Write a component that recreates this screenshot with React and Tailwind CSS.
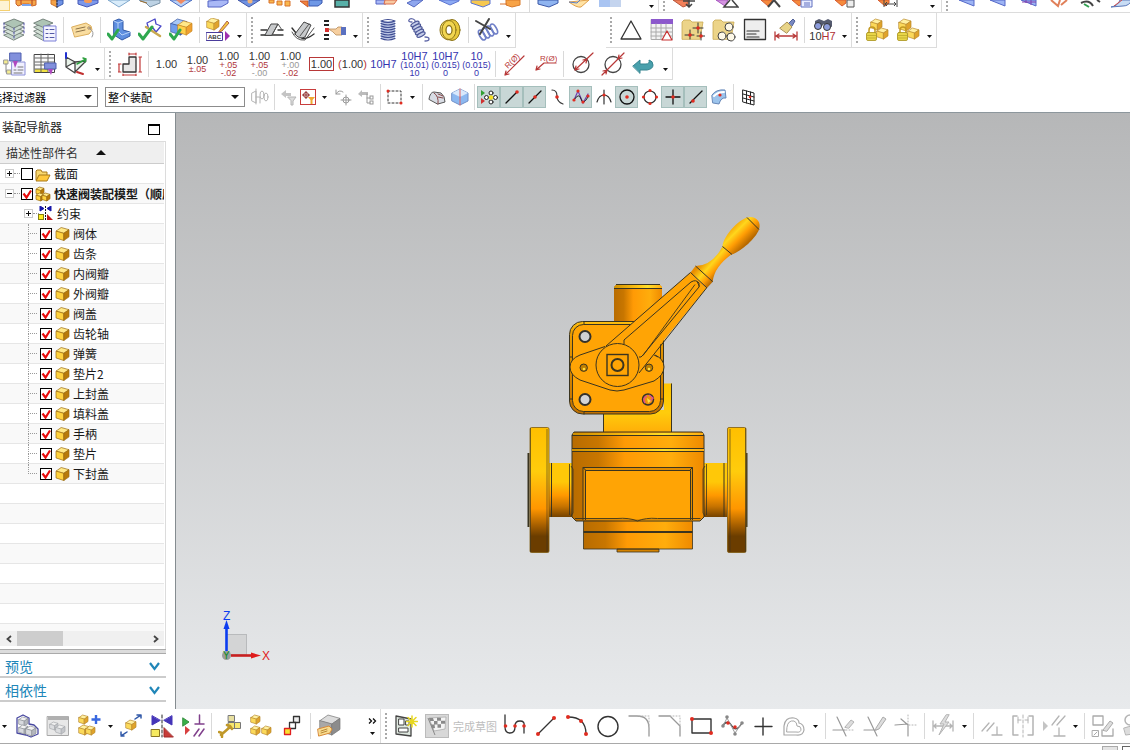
import React from "react";

/* ---------- toolbar primitives ---------- */

function Tool({ label, className = "", children }) {
  return (
    <button type="button" aria-label={label} title={label} className={`flex h-full w-[31px] shrink-0 items-center justify-center ${className}`}>
      {children}
    </button>
  );
}

function Snap({ label, on, className = "", children }) {
  return (
    <button
      type="button"
      aria-label={label}
      aria-pressed={!!on}
      className={`flex h-[22px] w-[23px] shrink-0 items-center justify-center ${on ? "border border-[#a5bfbc] bg-[#c8d7d6]" : ""} ${className}`}
    >
      {children}
    </button>
  );
}

function Sep() {
  return <span className="flex h-full w-1.5 shrink-0 items-center justify-center"><span className="h-[26px] w-px bg-[#d9d9d9]" /></span>;
}

function Grip() {
  return (
    <span className="flex h-full w-[9px] shrink-0 items-center justify-center">
      <span className="h-[26px] border-l-2 border-dotted border-[#a9a9a9]" />
    </span>
  );
}

function More({ label = "更多", mid = false, className = "" }) {
  return (
    <button type="button" aria-label={label} className={`flex h-full w-[13px] shrink-0 items-center justify-center ${mid ? "" : "pt-3"} ${className}`}>
      <svg width="5" height="3" viewBox="0 0 5 3"><path d="M0 0h5L2.500 3z" fill="#111" /></svg>
    </button>
  );
}

function Icon({ children, className = "" }) {
  return (
    <svg viewBox="0 0 24 24" className={`size-6 shrink-0 ${className}`} fill="none" strokeLinecap="round" strokeLinejoin="round">
      {children}
    </svg>
  );
}

function Small({ children }) {
  return (
    <svg viewBox="0 0 18 18" className="size-[18px] shrink-0" fill="none" strokeLinecap="round">
      {children}
    </svg>
  );
}

function Strip({ children }) {
  return (
    <svg viewBox="0 0 24 8" className="h-2 w-6 shrink-0 self-start" fill="none">
      {children}
    </svg>
  );
}

const GOLD = ["#fff0a0", "#fbd95a", "#e0a32a", "#b98a2c"];
const PART = ["#ffe988", "#ffd23e", "#b87a08", "#9a6a10"];
const BLUE = ["#a8c8f8", "#6f9cec", "#3d62c0", "#34529e"];
const GRAY = ["#f2f2f2", "#d8dade", "#b4b7bd", "#8d9096"];

function Cube({ x = 0, y = 0, s = 12, c = GOLD }) {
  const h = s * 0.28;
  const w = s * 0.6;
  const b = s;
  return (
    <g stroke={c[3]} strokeWidth="0.7" strokeLinejoin="round">
      <path d={`M${x} ${y + h}L${x + s - w} ${y}L${x + s} ${y + h * 0.6}L${x + w} ${y + h * 1.6}Z`} fill={c[0]} />
      <path d={`M${x} ${y + h}L${x + w} ${y + h * 1.6}V${y + b}L${x} ${y + b - h * 0.7}Z`} fill={c[1]} />
      <path d={`M${x + w} ${y + h * 1.6}L${x + s} ${y + h * 0.6}V${y + b - h}L${x + w} ${y + b}Z`} fill={c[2]} />
    </g>
  );
}

function Dot({ x, y, r = 1.8, c = "#e02c20" }) {
  return <circle cx={x} cy={y} r={r} fill={c} />;
}

const Tick = () => <path d="M1 16l4 5 6-9" stroke="#2fa84f" strokeWidth="3" />;
const Lock = () => (
  <g>
    <path d="M4 15v-3a3 3 0 016 0v3" stroke="#c49a20" strokeWidth="1.500" />
    <rect x="1.500" y="14.500" width="10" height="8" rx="1.500" fill="#e8d648" stroke="#a8921c" strokeWidth=".8" />
    <path d="M2 17.500h9M2 20h9" stroke="#b8a428" strokeWidth=".7" />
  </g>
);
const Folder = () => <path d="M1 21V4l2-2h6l2 2h11l-3 17z" fill="#ecd489" stroke="#c9a851" strokeWidth=".8" />;

/* ---------- dimension-style buttons ---------- */

function Dim({ label, main, a, b, tone = "text-[#333]", low = "text-[#b0353a]", low2 = "text-[#b0353a]", className = "" }) {
  return (
    <Tool label={label}>
      <span className={`flex flex-col items-center whitespace-nowrap font-[Liberation_Sans,sans-serif] text-[11px] leading-[10px] ${tone} ${className}`}>
        <span>{main}</span>
        {a && <span className={`text-[9px] leading-[8px] ${low}`}>{a}</span>}
        {b && <span className={`text-[9px] leading-[8px] ${low2}`}>{b}</span>}
      </span>
    </Tool>
  );
}

/* ---------- toolbars ---------- */

function TopStrip() {
  const sheet = (fill, line) => <path d="M1 0h22L12 7z" fill={fill} stroke={line} />;
  const angled = <path d="M3 0l7 6 4-3V0z" fill="#f58a3c" stroke="#d65a30" />;
  const bluePlane = <path d="M4 0l15 6V0z" fill="#9db4f4" stroke="#5568c8" />;
  return (
    <div className="flex h-[13px] overflow-hidden border-b border-[#dcdcdc]">
      <button type="button" aria-label="草图" className="-ml-0.5 h-[11px] w-3 shrink-0 border border-[#f5d070] bg-[#fdf3d4]" />
      <Tool label="拉伸"><Strip><path d="M2 0h20v5l-4 1-3-2H9L4 6 2 4z" fill="#f6a84a" stroke="#c8602a" /><path d="M8 4h9v2H8z" fill="#7ba4ec" /><path d="M7 0v4M18 0v5" stroke="#b04020" /></Strip></Tool>
      <Tool label="旋转"><Strip><path d="M6 0v4l6 3V0z" fill="#f3a347" stroke="#d0742a" /><path d="M12 0v7l6-3V0z" fill="#6f93e6" stroke="#3c5cb0" /><path d="M12 0v8" stroke="#333" strokeDasharray="2 1" /></Strip></Tool>
      <Tool label="孔"><Strip><path d="M2 0h20v3l-11 4L2 4z" fill="#7c98ea" stroke="#4658b8" /><ellipse cx="12" cy="1" rx="4" ry="2" fill="#f59a56" /></Strip></Tool>
      <Tool label="基准平面"><Strip>{sheet("#d9ecfa", "#7fa8cc")}</Strip></Tool>
      <Tool label="缝合"><Strip><path d="M1 0l7 3 4 4 10-4V0z" fill="#bdd2e4" stroke="#7890a4" /><path d="M2 1l7 2" stroke="#a07030" /></Strip></Tool>
      <Tool label="合并"><Strip>{sheet("#b8d0f6", "#4a6cc0")}<path d="M7 0h10l-5 4z" fill="#f08a60" /></Strip></Tool>
      <Sep />
      <Tool label="边倒圆"><Strip><path d="M2 1l12-1h8v3l-7 4H2z" fill="#a9b8f6" stroke="#5464c4" /></Strip></Tool>
      <Tool label="倒斜角"><Strip>{sheet("#6f92e2", "#4458a8")}<circle cx="13" cy="1" r="2.500" fill="#f2b478" /></Strip></Tool>
      <Tool label="阵列"><Strip><g fill="#f9b84e" stroke="#d8722c"><path d="M1 0h5v3H1zM9 1h5v4H9zM17 1h5v5h-5z" /></g></Strip></Tool>
      <Tool label="镜像"><Strip><path d="M1 1h8v6z" fill="#f0823c" stroke="#c8562a" /><path d="M10 0h13v3l-4 3h-9z" fill="#6f98e6" stroke="#3b58b0" /></Strip></Tool>
      <Tool label="颜色"><Strip><path d="M5 0h14v7H5z" fill="#58b0a8" stroke="#333" strokeWidth="1.500" /></Strip></Tool>
      <Tool label="替换面" className="ml-3.5"><Strip><path d="M1 0h10v4H1z" fill="#a9b8f6" stroke="#5464c4" /><path d="M10 0h12l-3 4H9z" fill="#f8c8a0" stroke="#d86a4a" /></Strip></Tool>
      <Tool label="偏置面"><Strip><path d="M1 3l6-3h10l-9 7z" fill="#8ea6ee" stroke="#5468c0" /></Strip></Tool>
      <Tool label="抽壳"><Strip><path d="M2 0l11 5 9-4V0z" fill="#8caaf4" stroke="#5c74d0" /></Strip></Tool>
      <Tool label="拔模"><Strip><path d="M3 0v3l12 4 7-3V0z" fill="#f6c850" stroke="#5c74d0" /></Strip></Tool>
      <Tool label="圆柱"><Strip><path d="M7 0v5l6 2 8-2V0z" fill="#f7a347" stroke="#d87a2a" /><path d="M1 4h7" stroke="#d8722c" /></Strip></Tool>
      <Sep />
      <Tool label="块"><Strip><path d="M2 0v4l11 3 9-4V0z" fill="#8fb4f0" stroke="#3b58a8" /></Strip></Tool>
      <Tool label="曲面"><Strip><path d="M2 2q8 6 12 5l8-7z" fill="#ffe2a4" stroke="#e0a04a" /><path d="M2 2l8 1 3-3" stroke="#5a80c8" /></Strip></Tool>
      <Tool label="网格"><Strip><path d="M1 0h22v7H1z" fill="#a9c4f2" /><path d="M12 0h11v7H12z" fill="#c4d4ee" /></Strip></Tool>
      <More mid className="ml-5" />
      <span className="border-l border-[#dcdcdc]" />
      <Grip />
      <Tool label="移动面"><Strip><path d="M1 0l10 7 5-2V0z" fill="#f2805a" stroke="#b8563c" /><path d="M11 1h12M17 0v7M14 4l3 3 3-3" stroke="#444" strokeWidth="1.500" /></Strip></Tool>
      <Tool label="删除面" className="ml-3"><Strip><path d="M1 0h12l-3 6z" fill="#d494e0" stroke="#a858c0" /><path d="M15 0l-6 7h14L17 0" fill="#fff" stroke="#444" strokeWidth="1.500" /></Strip></Tool>
      <Tool label="设为共面" className="ml-3"><Strip>{angled}<path d="M10 7l6-7 6 7" stroke="#444" strokeWidth="2" /></Strip></Tool>
      <Tool label="列表"><Strip>{angled}<path d="M12 0h11v7H12z" fill="#e8ecff" stroke="#6070c0" /><path d="M15 3h6M15 5h6" stroke="#6070c0" /></Strip></Tool>
      <Tool label="复制面" className="ml-3"><Strip>{angled}<path d="M15 0h7v7h-7z" fill="#eee" stroke="#555" /></Strip></Tool>
      <Tool label="线性尺寸" className="ml-3"><Strip>{angled}<path d="M9 0v7M22 0v7M10 4h11M12 2l-2 2 2 2M19 2l2 2-2 2" stroke="#444" /></Strip></Tool>
      <More mid className="ml-6" />
      <span className="ml-0.5 border-l border-[#dcdcdc]" />
      <Grip />
      <Tool label="四点曲面"><Strip>{bluePlane}</Strip></Tool>
      <Tool label="填充曲面"><Strip>{bluePlane}</Strip></Tool>
      <Tool label="网格曲面"><Strip>{bluePlane}<path d="M9 0v3M14 0v5M5 2h14" stroke="#8040b0" /></Strip></Tool>
      <Tool label="扫掠"><Strip><path d="M3 0l7 6 2-6M13 5l6-5" stroke="#e0805a" strokeWidth="2" /></Strip></Tool>
      <Tool label="截面曲线"><Strip><path d="M2 3q8-4 12 3M18 0l3 2" stroke="#444" strokeWidth="2" /><path d="M5 4l5 3" stroke="#30a050" strokeWidth="2" /></Strip></Tool>
      <Tool label="桥接"><Strip><path d="M1 7q7-1 9-7h12q-3 6-9 6z" fill="#c8dcf4" stroke="#5a78b8" /><path d="M4 6l8-6" stroke="#d04848" /></Strip></Tool>
    </div>
  );
}

function FeatureBar() {
  return (
    <div className="flex h-[35px] items-stretch">
      <div className="-ml-0.5 flex border-b border-r border-[#dcdcdc]">
        <Tool label="图层设置"><Icon><g stroke="#6d7a74" strokeWidth=".9"><path d="M2 17l10-4 10 4-10 5z" fill="#c6d6cb" /><path d="M2 13l10-4 10 4-10 5z" fill="#d5e2d8" /><path d="M2 9l10-4 10 4-10 5z" fill="#c6d6cb" /><path d="M2 5l10-4 10 4-10 5z" fill="#aec4b5" /></g><path d="M2 5v12M22 5v12M12 10v12" stroke="#5050a8" strokeDasharray="2 2" /></Icon></Tool>
        <Tool label="图层类别"><Icon><g stroke="#6d7a74" strokeWidth=".9"><path d="M1 17l9-4 10 4-10 5z" fill="#c6d6cb" /><path d="M1 13l9-4 10 4-10 5z" fill="#d5e2d8" /><path d="M1 9l9-4 10 4-10 5z" fill="#c6d6cb" /><path d="M1 5l9-4 10 4-10 4z" fill="#aec4b5" /></g><rect x="11" y="8" width="12" height="15" fill="#f4f4ff" stroke="#7c80d8" /><path d="M13 11.500h2M13 15.500h2M13 19.500h2M17 11.500h4M17 15.500h4M17 19.500h4" stroke="#555aa8" /></Icon></Tool>
        <Sep />
        <Tool label="属性"><Icon><path d="M2 9l14-4 5 3 1 4-3 4-14 3z" fill="#f9dda0" stroke="#dcae5c" /><path d="M6 11l9-2M6 14l9-2" stroke="#8c7248" /><circle cx="19" cy="10" r="1.200" fill="#fff" stroke="#a08050" /><path d="M20 11q5 3 2 8" stroke="#999" /></Icon></Tool>
        <Sep />
        <Tool label="检查体"><Icon><path d="M7 3l5-2 4 2v9l7 2v4l-8 4-8-5z" fill="#5f8fe0" stroke="#3058a8" /><path d="M7 3l4 2 5-2M11 5v8l4 4 8-3" stroke="#b8d2f8" /><Tick /></Icon></Tool>
        <Tool label="检查草图"><Icon><path d="M9 5l8-4 1 5 5 2-5 6-3-4-4 2z" fill="#fff" stroke="#4a48c8" strokeWidth="1.300" /><path d="M8 9l14 9" stroke="#c8a850" strokeWidth="2.500" /><path d="M1 16l4 5 9-12" stroke="#2fa84f" strokeWidth="3" /></Icon></Tool>
        <Tool label="检查部件"><Icon><Cube x={2} y={1} s={16} c={BLUE} /><Cube x={9} y={3} s={14} c={["#ffe88a", "#ffd04a", "#f0a030", "#c88820"]} /><Tick /></Icon></Tool>
        <Sep />
        <Tool label="PMI 注释">
          <Icon>
            <Cube x={1} y={0} s={12} />
            <path d="M14 12l7-9 2 2-7 8-3 1z" fill="#f4c542" stroke="#a04838" strokeWidth=".8" />
            <rect x="0.500" y="14.500" width="16" height="8" fill="#fff" stroke="#4a3c9c" />
            <text x="2" y="21" fontSize="6" fontWeight="700" fontFamily="Liberation Sans" fill="#333">ABC</text>
            <path d="M19 13v10l5-5z" fill="#a030b0" />
          </Icon>
        </Tool>
        <More />
      </div>
      <div className="flex border-b border-r border-[#dcdcdc]">
        <Grip />
        <Tool label="筋板"><Icon><path d="M1 17h22M1 12h6M18 12h5" stroke="#333" strokeWidth="1.400" /><path d="M5 17l6-11h7l-6 11z" fill="#c8cacc" stroke="#444" /><path d="M12 17l6-11 4 6" stroke="#555" /></Icon></Tool>
        <Tool label="凸起"><Icon><path d="M1 10q6 8 10 10t12-4" stroke="#333" strokeWidth="1.400" /><path d="M4 16l9-12 7 3-6 12q-6 3-10-3z" fill="#c8cacc" stroke="#444" /><path d="M9 18L18 6M1 14q4 9 13 8l9-12" stroke="#555" /></Icon></Tool>
        <Tool label="特征重排序"><Icon><path d="M2 3h5M2 7h5M2 17h5M2 21h5" stroke="#222" strokeWidth="1.800" strokeLinecap="butt" /><rect x="3" y="10" width="4" height="4" fill="#d83030" /><path d="M7 11h7l2-2h4v8h-6l-3-3z" fill="#f6cfa0" stroke="#b88a58" strokeWidth=".8" /><path d="M19 9h5v8h-5z" fill="#5a70c0" /></Icon></Tool>
        <More />
      </div>
      <div className="flex border-b border-r border-[#dcdcdc]">
        <Grip />
        <Tool label="圆柱弹簧"><Icon><path d="M5 3h14v18H5z" fill="#b9c4e4" /><g stroke="#3c4a90" strokeWidth="1.200"><path d="M5 3q7-3 14 0M5 3q7 3 14 0M5 5.500q7 3 14 0M5 8q7 3 14 0M5 10.500q7 3 14 0M5 13q7 3 14 0M5 15.500q7 3 14 0M5 18q7 3 14 0M5 20.500q7 3 14 0" /></g></Icon></Tool>
        <Tool label="拉伸弹簧"><Icon><path d="M5 4q-4 0-3-2t4-1 2 4M18 19q4 0 4 2t-4 2" stroke="#6068a8" strokeWidth="1.300" /><g stroke="#4d5898" strokeWidth="1.200" fill="#c4cce8"><ellipse cx="8" cy="6" rx="4.500" ry="1.800" transform="rotate(-28 8 6)" /><ellipse cx="9.500" cy="8.700" rx="4.500" ry="1.800" transform="rotate(-28 9.500 8.700)" /><ellipse cx="11" cy="11.400" rx="4.500" ry="1.800" transform="rotate(-28 11 11.400)" /><ellipse cx="12.500" cy="14" rx="4.500" ry="1.800" transform="rotate(-28 12.500 14)" /><ellipse cx="14" cy="16.700" rx="4.500" ry="1.800" transform="rotate(-28 14 16.700)" /></g></Icon></Tool>
        <Tool label="碟形弹簧"><Icon><ellipse cx="14" cy="12" rx="8" ry="10.500" fill="#e8c83c" stroke="#8c7418" /><path d="M10 2q-8 2-8 10t8 10" fill="#f6de68" stroke="#8c7418" /><ellipse cx="11" cy="12" rx="7" ry="9.500" fill="#f2d650" stroke="#8c7418" /><ellipse cx="11" cy="12" rx="3" ry="4.500" fill="#fff" stroke="#8c7418" strokeWidth="1.300" /></Icon></Tool>
        <Sep />
        <Tool label="删除弹簧"><Icon><g stroke="#7080c8" strokeWidth="1.600"><ellipse cx="7" cy="17" rx="2.500" ry="5.500" transform="rotate(-30 7 17)" /><ellipse cx="11" cy="15" rx="2.500" ry="5.500" transform="rotate(-30 11 15)" /><ellipse cx="15" cy="13" rx="2.500" ry="5.500" transform="rotate(-30 15 13)" /><ellipse cx="19" cy="11" rx="2.500" ry="5.500" transform="rotate(-30 19 11)" /></g><path d="M1 3l14 8M14 1L5 16" stroke="#444" strokeWidth="2" /></Icon></Tool>
        <More />
      </div>
      <div className="ml-[90px] flex border-b border-r border-[#dcdcdc]">
        <Grip />
        <Tool label="三角"><Icon><path d="M12 3l10 18H2z" stroke="#333" strokeWidth="1.300" /></Icon></Tool>
        <Tool label="表格"><Icon><rect x="1.500" y="1.500" width="21" height="20" fill="#f3f3f3" stroke="#aaa" /><path d="M1 1h22v5H1z" fill="#8c58cc" /><path d="M1 10h21M1 14h21M1 18h21M6 6v15M11 6v15M16 6v15" stroke="#aaa" /><path d="M17 13l5 9H12z" fill="#fff" stroke="#c83030" strokeWidth="1.200" /></Icon></Tool>
        <Tool label="点集"><Icon><Folder /><path d="M17 5v10M12 10h10M9 12v9M4 17h9M20 14v8M16 18h8" stroke="#333" /><Dot x={17} y={10} /><Dot x={9} y={17} /><Dot x={20} y={18} /></Icon></Tool>
        <Tool label="圆集"><Icon><Folder /><g stroke="#444" fill="#fdf8e8"><circle cx="17" cy="9" r="4" /><circle cx="10" cy="18" r="4" /><circle cx="19" cy="19" r="4" /></g></Icon></Tool>
        <Tool label="注释"><Icon><rect x="1.500" y="1.500" width="21" height="20" fill="#eee" stroke="#333" strokeWidth="1.300" /><path d="M4 13h12M4 16h9M4 19h12" stroke="#333" strokeWidth="1.200" /></Icon></Tool>
        <Tool label="尺寸样式"><Icon><path d="M15 5l4-4 2 2-3 5z" fill="#7888c0" stroke="#506098" /><path d="M6 10l7-6 5 5-5 6z" fill="#e8d488" stroke="#a89050" /><path d="M1 14v8M23 14v8M2 18h20M5 16l-3 2 3 2M19 16l3 2-3 2" stroke="#b83838" strokeWidth="1.300" /></Icon></Tool>
        <Sep />
        <Tool label="查找公差">
          <span className="flex flex-col items-center">
            <svg width="20" height="13" viewBox="0 0 20 13"><path d="M2 3l4-2 5 2 4-2 4 2v6l-8-3-2 2-7-1z" fill="#555b70" /><circle cx="5" cy="8" r="3.500" fill="#8c9cdc" stroke="#333" /><circle cx="14" cy="9" r="3.500" fill="#8c9cdc" stroke="#333" /></svg>
            <span className="font-[Liberation_Sans,sans-serif] text-[11px] leading-[11px] text-[#333]">10<span className="text-[#b03035]">H7</span></span>
          </span>
        </Tool>
        <More />
      </div>
      <div className="flex border-b border-r border-[#dcdcdc]">
        <Grip />
        <Tool label="锁定组件"><Icon><Cube x={6} y={1} s={11} /><Cube x={12} y={10} s={11} /><Lock /></Icon></Tool>
        <Tool label="解锁组件"><Icon><Cube x={3} y={1} s={12} /><Cube x={12} y={10} s={11} /><Lock /></Icon></Tool>
        <More />
      </div>
    </div>
  );
}

function DimensionBar() {
  return (
    <div className="flex h-8 items-stretch">
      <div className="-ml-0.5 flex border-b border-r border-[#dcdcdc]">
        <Tool label="部件族"><Icon><rect x="10" y="10" width="13" height="13" fill="#f0f0ff" stroke="#8c90d8" /><path d="M16 15h5M16 18h5M12 18h2M12 21h8" stroke="#777" /><path d="M2 8h4v4H2zM5 18h4v4H5z" fill="#f4ec90" stroke="#999" /><path d="M4 12v8" stroke="#888" /><path d="M8 1h11v8H8z" fill="#8290dc" stroke="#5060b0" /><path d="M11 9h5l-3 7z" fill="#b048c0" /></Icon></Tool>
        <Tool label="电子表格"><Icon><rect x="1.500" y="2.500" width="20" height="18" fill="#fafafa" stroke="#444" /><path d="M2 17h13v3H2z" fill="#f0e040" /><path d="M2 6h19M2 10h19M2 13h19M2 17h19M8 2v18M15 2v18" stroke="#666" /><path d="M12 11h11v6H12z" fill="#8290dc" stroke="#5060b0" /><path d="M15 17h5l-2 6z" fill="#b048c0" /></Icon></Tool>
        <Tool label="WCS"><Icon><path d="M2 5v10l9 6V10zM2 15l9-5 11-1-11 11" fill="#e9f3ea" stroke="#444" strokeWidth="1.300" /><path d="M2 6V1" stroke="#2030d0" strokeWidth="2" /><path d="M13 12l9-5M19 6l3 1-1 3" stroke="#30a040" strokeWidth="1.500" /><path d="M13 20l6 2" stroke="#c03030" strokeWidth="2" /></Icon></Tool>
        <More />
      </div>
      <div className="flex border-b border-r border-[#dcdcdc]">
        <Grip />
        <Tool label="快速尺寸"><Icon><path d="M5 20v-8h6V5h7v15z" fill="#e8e8e8" stroke="#333" strokeWidth="1.300" /><path d="M1 12v8M0 12h3M0 20h3M11 2h7M11 1v2M18 1v2M22 5v15M21 5h3M21 20h3M5 23h13M5 22v2M18 22v2" stroke="#c03838" strokeWidth="1.200" /></Icon></Tool>
        <Sep />
        <Dim label="无公差" main="1.00" />
        <Dim label="等双向公差" main="1.00" a="±.05" />
        <Dim label="双向公差" main="1.00" a="+.05" b="-.02" />
        <Dim label="单向正公差" main="1.00" a="+.05" b="-.00" low2="text-[#999]" />
        <Dim label="单向负公差" main="1.00" a="+.00" b="-.02" low="text-[#999]" />
        <Dim label="基本尺寸" main="1.00" className="border border-[#b83838] px-px py-px" />
        <Dim label="参考尺寸" main={<><span className="text-[#b83838]">(</span>1.00<span className="text-[#b83838]">)</span></>} />
        <Dim label="限制与拟合" main="10H7" tone="text-[#3535b0]" />
        <Dim label="拟合极限" main="10H7" a="(10.01)" b="10" tone="text-[#3535b0]" low="text-[#3535b0]" low2="text-[#3535b0]" />
        <Dim label="拟合公差" main="10H7" a="(0.015)" b="0" tone="text-[#3535b0]" low="text-[#3535b0]" low2="text-[#3535b0]" />
        <Dim label="公差值" main="10" a="(0.015)" b="0" tone="text-[#3535b0]" low="text-[#3535b0]" low2="text-[#3535b0]" />
        <Sep />
        <Tool label="半径平行"><Icon><path d="M22 4L3 23M3 23l1-4M3 23l4-1" stroke="#b83838" strokeWidth="1.200" /><text x="6" y="17" fontSize="8" fontFamily="Liberation Sans" fill="#b83838" transform="rotate(-45 6 17)">R(Ø)</text></Icon></Tool>
        <Tool label="半径水平"><Icon><path d="M23 11H11L3 18M3 18l1-4M3 18l4-1" stroke="#b83838" strokeWidth="1.200" /><text x="7" y="9" fontSize="8" fontFamily="Liberation Sans" fill="#b83838">R(Ø)</text></Icon></Tool>
        <Sep />
        <Tool label="直径内"><Icon><circle cx="11" cy="12.500" r="8" stroke="#444" strokeWidth="1.300" /><path d="M23 1L5 18M5 18l1-4M5 18l4-1M17 7l-4 1M17 7l-1 4" stroke="#b83838" strokeWidth="1.200" /></Icon></Tool>
        <Tool label="直径外"><Icon><circle cx="12" cy="12.500" r="8" stroke="#444" strokeWidth="1.300" /><path d="M23 1L1 23M17 7l4-1M17 7l1-4M6 18l-4 1M6 18l-1 4" stroke="#b83838" strokeWidth="1.200" /></Icon></Tool>
        <Tool label="返回"><Icon><path d="M1 14l7-6v4h6q4 0 3-4 4 1 4 5t-6 5H8v3z" fill="#48a0ac" stroke="#348490" /></Icon></Tool>
        <More />
      </div>
    </div>
  );
}

function Combo({ label, className, options }) {
  return (
    <label className={`relative flex h-5 shrink-0 ${className}`}>
      <span className="sr-only">{label}</span>
      <select className="h-full w-full appearance-none border border-[#8c8c8c] bg-white px-0.5 text-[11px] leading-[18px] text-black">
        {options.map((o) => <option key={o}>{o}</option>)}
      </select>
      <svg className="pointer-events-none absolute right-1.5 top-2" width="8" height="4" viewBox="0 0 8 4"><path d="M0 0h8L4 4z" fill="#111" /></svg>
    </label>
  );
}

function SelectionBar() {
  const faded = "#b4b4b4";
  return (
    <div className="flex h-8 items-center pt-0.5">
      <Combo label="类型过滤器" className="-ml-3 w-[110px]" options={["选择过滤器"]} />
      <Combo label="选择范围" className="ml-[7px] w-[140px]" options={["整个装配"]} />
      <Snap label="关联" className="ml-[3px]"><Small><path d="M5 1v15M1 5l4-2v12l-4-2zM5 9h4v6" stroke={faded} /><ellipse cx="11" cy="7" rx="2" ry="4" stroke={faded} /><ellipse cx="15" cy="9" rx="2" ry="4" stroke={faded} /></Small></Snap>
      <Sep />
      <Snap label="重置过滤器"><Small><path d="M1 6l5-4v3h5v3H6v2z" fill="#c4c4c4" /><path d="M8 9h8l-3 4v4h-2v-4z" fill="#ddd" stroke={faded} /></Small></Snap>
      <button type="button" aria-label="常规选择过滤器" className="flex size-4 shrink-0 items-center justify-center border border-[#c83c3c]">
        <svg width="14" height="14" viewBox="0 0 14 14" fill="none"><circle cx="5" cy="5" r="2.500" stroke="#903030" /><path d="M5 1v8M1 5h8" stroke="#903030" /><path d="M7 7h7l-2.500 3v4h-2v-4z" fill="#f0a830" /></svg>
      </button>
      <More mid className="ml-0.5" />
      <Snap label="取消选择"><Small><path d="M2 6q3-5 7-2M2 2v4h4M12 7v10M7 12h10" stroke="#999" /><circle cx="12" cy="12" r="3" stroke="#999" /></Small></Snap>
      <Snap label="在导航器中查找"><Small><path d="M1 6l4-4v2h6v3H5v2z" fill="#bbb" /><path d="M10 6v9h3M10 10h3" stroke="#999" /><rect x="13" y="8" width="3" height="3" stroke="#999" /><rect x="13" y="13" width="3" height="3" stroke="#999" /></Small></Snap>
      <Sep />
      <Snap label="矩形选择"><Small><rect x="2" y="3" width="13" height="12" stroke="#333" strokeDasharray="2 2" /><Dot x={2} y={3} r={1.500} /><Dot x={15} y={15} r={1.500} /></Small></Snap>
      <More mid />
      <Sep />
      <Snap label="允许选择隐藏"><Small><path d="M1 11q1-7 5-7l7 1q4 3 4 9l-7 2z" fill="#d8dce4" stroke="#555" /><path d="M6 5q5 3 4 11M10 6l5 2M10 9l5 1" stroke="#884848" /></Small></Snap>
      <Snap label="着色体"><Small><path d="M1 5l8-4 8 4v8l-8 4-8-4z" fill="#8cb8f0" stroke="#7090c8" /><path d="M1 5l8 4 8-4-8-4z" fill="#d8e8fc" /><path d="M9 9v8M9 1v8" stroke="#e06060" /></Small></Snap>
      <Sep />
      <Snap on label="启用捕捉点"><Small><path d="M1 2l4 3-4 3z" fill="#30a030" /><path d="M1 10l4 3-4 3z" fill="#d03030" /><g fill="#fff" stroke="#222"><circle cx="11" cy="5" r="2" /><circle cx="11" cy="14" r="2" /><circle cx="6.500" cy="9.500" r="2" /><circle cx="15.500" cy="9.500" r="2" /></g><circle cx="11" cy="9.500" r="2.200" fill="#f6e020" /></Small></Snap>
      <Snap on label="端点"><Small><path d="M3 15L14 4" stroke="#111" strokeWidth="1.300" /><Dot x={14} y={4} /></Small></Snap>
      <Snap on label="中点"><Small><path d="M3 15L15 3" stroke="#111" strokeWidth="1.300" /><Dot x={9} y={9} /></Small></Snap>
      <Snap label="控制点"><Small><path d="M3 2q5 0 5 6t6 8" stroke="#333" strokeWidth="1.200" /><Dot x={8} y={9} /></Small></Snap>
      <Snap on label="极点"><Small><path d="M2 12l4-9 5 12 5-9" stroke="#7040b0" strokeWidth="1.200" /><path d="M2 12q5-8 7-1t7-2" stroke="#222" /><Dot x={2} y={12} r={1.600} /><Dot x={6} y={3} r={1.600} /><Dot x={11} y={14} r={1.600} /><Dot x={16} y={8} r={1.600} /></Small></Snap>
      <Snap label="交点"><Small><path d="M9 2v14M2 14q2-7 7-7t7 7" stroke="#333" strokeWidth="1.200" /><Dot x={9} y={7} r={1.600} /></Small></Snap>
      <Snap on label="圆心"><Small><circle cx="9" cy="9" r="7" stroke="#111" strokeWidth="1.300" /><Dot x={9} y={9} /></Small></Snap>
      <Snap label="象限点"><Small><circle cx="9" cy="9" r="6" stroke="#333" strokeWidth="1.200" /><Dot x={9} y={2.5} r={1.600} /><Dot x={9} y={15.5} r={1.600} /><Dot x={2.5} y={9} r={1.600} /><Dot x={15.5} y={9} r={1.600} /></Small></Snap>
      <Snap on label="现有点"><Small><path d="M9 2v14M2 9h14" stroke="#111" strokeWidth="1.300" /><Dot x={9} y={9} /></Small></Snap>
      <Snap on label="曲线上的点"><Small><path d="M3 15L15 3" stroke="#111" strokeWidth="1.300" /><Dot x={6} y={13} /></Small></Snap>
      <Snap label="面上的点"><Small><path d="M2 7q4-6 13-5l1 8q-5-1-7 6l-6-1z" fill="#9cc4ec" stroke="#6888b8" /><path d="M4 8q4-4 10-4" stroke="#fff" strokeWidth="2" /><Dot x={10} y={7} r={1.600} /></Small></Snap>
      <Sep />
      <Snap label="有界栅格点"><Small><path d="M4 2l11 3v12L4 14zM4 6l11 3M4 10l11 3M7.500 3v12M11.500 4v12" stroke="#222" /><Dot x={11} y={9} r={1.300} /></Small></Snap>
    </div>
  );
}

/* ---------- assembly navigator ---------- */

function TreeCheck({ id, on }) {
  return (
    <span className="relative flex size-3 shrink-0">
      <input id={id} type="checkbox" defaultChecked={on} className="peer size-3 appearance-none border border-black bg-white outline outline-1 -outline-offset-1 outline-black" />
      <svg className="pointer-events-none absolute inset-0 hidden size-3 peer-checked:block" viewBox="0 0 12 12"><path d="M2.500 5.500l3 4L10 2.500" fill="none" stroke="#e80c0c" strokeWidth="2.200" /></svg>
    </span>
  );
}

function Expander({ open }) {
  return (
    <button type="button" aria-label={open ? "收起" : "展开"} className="flex size-[9px] shrink-0 items-center justify-center border border-[#ccc] bg-white">
      <svg width="5" height="5" viewBox="0 0 5 5"><path d={open ? "M0 2.500h5" : "M0 2.500h5M2.500 0v5"} stroke="#111" /></svg>
    </button>
  );
}

const Dots = () => <span className="w-1.5 shrink-0 border-t border-dotted border-[#999]" />;

function Branch({ last }) {
  return (
    <span className="ml-7 flex w-[9px] shrink-0 flex-col self-stretch">
      <span className="h-2.5 border-b border-l border-dotted border-[#999]" />
      {!last && <span className="flex-1 border-l border-dotted border-[#999]" />}
    </span>
  );
}

const PARTS = ["阀体", "齿条", "内阀瓣", "外阀瓣", "阀盖", "齿轮轴", "弹簧", "垫片2", "上封盖", "填料盖", "手柄", "垫片", "下封盖"];
const ROW = "flex h-5 shrink-0 items-center border-b border-[#e6e6e6] text-[12px] leading-[18px] whitespace-nowrap odd:bg-white even:bg-[#f9f9f9]";

function Navigator() {
  return (
    <aside className="flex w-[166px] shrink-0 flex-col bg-white">
      <div className="flex h-7 items-center justify-between pl-0.5 pr-1.5">
        <h2 className="text-[12px] leading-5 text-[#222]">装配导航器</h2>
        <button type="button" aria-label="最大化" className="mt-1 h-[11px] w-3 border border-t-2 border-black" />
      </div>
      <div className="flex min-h-0 flex-1 flex-col overflow-hidden border-r border-t border-[#dcdcdc] pr-px">
        <div className="flex h-[22px] shrink-0 items-center border-b border-[#ccc] bg-[#efefef] pl-1.5 text-[12px] text-[#333]">
          描述性部件名
          <svg className="ml-[18px]" width="10" height="5" viewBox="0 0 10 5"><path d="M0 5h10L5 0z" fill="#111" /></svg>
        </div>
        <ul className="flex min-h-0 flex-1 flex-col overflow-hidden text-[#1a1a1a]">
          <li className={ROW}>
            <span className="ml-[5px] flex items-center"><Expander /><Dots /></span>
            <span className="ml-px"><TreeCheck id="n-section" /></span>
            <svg className="ml-0.5 mt-1 shrink-0" width="16" height="13" viewBox="0 0 16 13"><path d="M1 11V2l1-1h4l1 2h5v3" fill="#f8d870" stroke="#a87818" /><path d="M1 12l3-6h11l-3 6z" fill="#ffc83c" stroke="#a87818" /></svg>
            <label htmlFor="n-section" className="ml-[3px]">截面</label>
          </li>
          <li className={ROW}>
            <span className="ml-[5px] flex items-center"><Expander open /><Dots /></span>
            <span className="ml-px"><TreeCheck id="n-root" on /></span>
            <svg className="ml-0.5 shrink-0" width="16" height="16" viewBox="0 0 16 16"><Cube x={1} y={1} s={8} c={PART} /><Cube x={1} y={7} s={8} c={PART} /><Cube x={7} y={7} s={8} c={PART} /></svg>
            <label htmlFor="n-root" className="ml-[3px] font-bold">快速阀装配模型（顺序）</label>
          </li>
          <li className={ROW}>
            <span className="ml-6 flex items-center"><Expander /><Dots /></span>
            <svg className="-ml-px shrink-0" width="15" height="15" viewBox="0 0 15 15"><path d="M2 0v5l4-2.500zM13 0v5L9 2.500z" fill="#1414a8" stroke="#1414a8" /><path d="M7.500 0v15" stroke="#111" strokeDasharray="2 1" /><rect x=".5" y="8.500" width="5" height="5" fill="#ffee20" stroke="#888010" /><path d="M9 8v6h6z" fill="#c01818" /></svg>
            <span className="ml-1">约束</span>
          </li>
          {PARTS.map((name, i) => (
            <li key={name} className={ROW}>
              <Branch last={i === PARTS.length - 1} />
              <span className="ml-[3px]"><TreeCheck id={`n-part-${i}`} on /></span>
              <svg className="ml-[3px] shrink-0" width="15" height="14" viewBox="0 0 15 14"><Cube x={1} y={0.5} s={13} c={PART} /></svg>
              <label htmlFor={`n-part-${i}`} className="ml-[3px]">{name}</label>
            </li>
          ))}
          {Array.from({ length: 8 }, (_, i) => <li key={i} aria-hidden="true" className={ROW} />)}
        </ul>
        <div className="flex h-[15px] shrink-0 items-center bg-[#f0f0f0]">
          <button type="button" aria-label="向左滚动" className="flex w-[17px] justify-center"><svg width="6" height="8" viewBox="0 0 6 8"><path d="M5 1L1.500 4 5 7" fill="none" stroke="#444" strokeWidth="1.800" /></svg></button>
          <span className="h-full w-[46px] bg-[#cdcdcd]" />
          <button type="button" aria-label="向右滚动" className="ml-auto flex w-[17px] justify-center"><svg width="6" height="8" viewBox="0 0 6 8"><path d="M1 1l3.500 3L1 7" fill="none" stroke="#444" strokeWidth="1.800" /></svg></button>
        </div>
        <span className="h-[3px] shrink-0" />
      </div>
      <div className="h-[5px] border-y border-[#aaa] bg-[#dcdcdc]" />
      {["预览", "相依性"].map((t) => (
        <button key={t} type="button" className="flex h-6 shrink-0 items-center justify-between border-b-2 border-[#ccc] pl-[5px] pr-1.5 pt-0.5 text-[14px] leading-5 text-[#2086b8]">
          {t}
          <svg width="11" height="9" viewBox="0 0 11 9"><path d="M1 1l4.500 6L10 1" fill="none" stroke="#2086b8" strokeWidth="2.200" /></svg>
        </button>
      ))}
      <div className="h-[7px]" />
    </aside>
  );
}

/* ---------- model view ---------- */

function ValveModel() {
  const k = "#3a3420";
  const stops = (list) => list.map(([o, c]) => <stop key={o} offset={o} stopColor={c} />);
  return (
    <svg width="260" height="400" viewBox="523 211 260 400" fill="none" role="img" aria-label="快速阀装配模型">
      <defs>
        <linearGradient id="cyl">{stops([[0, "#b86c00"], [0.2, "#c87600"], [0.4, "#ff9a05"], [0.75, "#ffad0c"], [1, "#ef8a00"]])}</linearGradient>
        <linearGradient id="rim">{stops([[0, "#d09000"], [0.5, "#ffc414"], [0.7, "#ffe02a"], [1, "#ffae10"]])}</linearGradient>
        <linearGradient id="plate" x2="0" y2="1">{stops([[0, "#ffbf00"], [0.35, "#ffcc0c"], [0.5, "#ffb008"], [0.65, "#ff9600"], [0.78, "#a86000"], [0.87, "#6b3d00"], [1, "#6b3d00"]])}</linearGradient>
        <linearGradient id="pipe" x2="0" y2="1">{stops([[0, "#ffc808"], [0.35, "#ffc808"], [0.6, "#ff9800"], [0.8, "#c87400"], [1, "#744200"]])}</linearGradient>
        <linearGradient id="neck" x2="0" y2="1">{stops([[0, "#ffc400"], [0.6, "#ffcc0c"], [1, "#ffae08"]])}</linearGradient>
        <linearGradient id="edge" x2="0" y2="1">{stops([[0, "#ffc010"], [0.15, "#e89a00"], [1, "#c07000"]])}</linearGradient>
        <linearGradient id="grip" x1="728" y1="228" x2="745" y2="245" gradientUnits="userSpaceOnUse">{stops([[0, "#f29400"], [0.35, "#ffd61c"], [0.65, "#ff9c04"], [1, "#b86a00"]])}</linearGradient>
        <linearGradient id="stem" x1="702" y1="262" x2="718" y2="276" gradientUnits="userSpaceOnUse">{stops([[0, "#e88c00"], [0.4, "#ffd61c"], [0.7, "#ff9c04"], [1, "#b06400"]])}</linearGradient>
      </defs>

      <path d="M614 321V287l2-2h44l2 2v34z" fill="url(#cyl)" />
      <path d="M614 288v-1l2-2h44l2 2v1z" fill="url(#rim)" />
      <path d="M616 284.500h44M614 288.500h48" stroke={k} />

      <path d="M603.500 432V410H664V383.500h8V432z" fill="url(#neck)" />
      <path d="M603.500 410v22M671.500 383.500V432" stroke={k} />

      <path d="M528.500 453v74M746.500 453v74" stroke={k} strokeWidth="2" />
      <rect x="549" y="463" width="24" height="54" fill="url(#pipe)" />
      <rect x="703" y="463" width="24" height="54" fill="url(#pipe)" />
      <path d="M551.500 463v54M724 463v54" stroke={k} />
      <rect x="530" y="427.500" width="19" height="125" rx="1.500" fill="url(#plate)" stroke="#7d5a10" strokeWidth=".8" />
      <rect x="727.500" y="427.500" width="18.500" height="125" rx="1.500" fill="url(#plate)" stroke="#7d5a10" strokeWidth=".8" />
      <path d="M530.500 428v124M547 429v123M730 429v123M745.500 428v124" stroke={k} strokeOpacity=".75" strokeWidth=".8" />

      <rect x="583.500" y="518" width="109" height="31" fill="url(#cyl)" />
      <path d="M617 549h42v3h-42z" fill="#d58300" stroke={k} strokeWidth=".8" />
      <path d="M583.500 520v29h109v-29" stroke={k} strokeWidth=".8" />
      <path d="M583.500 532h109" stroke={k} strokeWidth="1.800" />

      <path d="M572 435l2-3h128l2 3v82l-4 4H576l-4-4z" fill="url(#cyl)" stroke={k} />
      <path d="M573 433h130v2H573z" fill="url(#rim)" />
      <path d="M572 449h132v2H572z" fill="url(#rim)" />
      <path d="M572 435.500h132M572 448.500h132M572 451.500h132" stroke={k} />
      <path d="M583 468h110v52H583z" fill="#e08c00" />
      <path d="M586 470.500h105V519H586z" fill="#ffa405" />
      <path d="M583 520v-52.500h109.500V520M585.500 520v-49.500h105V520M583 467.500l3 3M692.500 467.500l-3 3" stroke={k} />
      <path d="M575 518.500h42q12-1 20.500 2.500 8-3.500 20-2.500h43" stroke={k} strokeWidth=".9" />
      <path d="M571 466l2 3v44l-2 3M705 466l-2 3v44l2 3M569.500 464v51M706.500 464v51" stroke={k} strokeWidth=".8" />

      <rect x="569.500" y="321.500" width="94" height="92.500" rx="13" fill="url(#edge)" stroke={k} />
      <rect x="572.500" y="324.500" width="88" height="87" rx="11" fill="#ffa405" stroke={k} />
      <path d="M584 321.500v3M569.500 357h3M569.500 399h3M660.500 399h3M584 411.500v3" stroke={k} />
      <path d="M605 346.500L580 355q-10 4-10 12t10 13l30 10q7 2 14 0l30-9q10-6 10-14t-9-12" fill="#ffa405" stroke={k} />

      <path d="M606 346L690.500 272.500l16 15.500L642 367z" fill="#ffa405" />
      <path d="M606 346L690.500 272.500M706.500 288L639 373" stroke={k} />
      <path d="M624 344v-4l67-58q5-3 8 1v4l-56 68q-2 3-4 2" stroke={k} />
      <path d="M697 281.500l2.500 5M695 284.500l-52 71M654 355l4 2" stroke={k} strokeWidth=".9" />
      <circle cx="617.500" cy="365" r="21.500" fill="#ffa405" stroke={k} />
      <rect x="607" y="354.500" width="21" height="21" stroke={k} strokeWidth="1.400" />
      <circle cx="617.500" cy="365" r="6" stroke={k} strokeWidth="2" />

      <g stroke="#33312c" strokeWidth="2">
        <circle cx="585" cy="336.500" r="5.500" fill="#cfd0d2" />
        <circle cx="585" cy="399.500" r="5.500" fill="#d3d4d6" />
        <circle cx="648" cy="399.500" r="5.500" fill="#ee9208" strokeWidth="1.500" />
      </g>
      <path d="M645 403q-3-5 2-7M649 395l4 3-4 4" stroke="#e0508c" strokeWidth="1.500" />
      <path d="M647 398l4 3-3 2z" fill="#ffe040" />
      <g fill="#c08000" stroke={k}>
        <circle cx="583.700" cy="367.700" r="3.700" />
        <circle cx="649" cy="367.700" r="3.700" />
      </g>
      <circle cx="584" cy="369" r="1.300" fill="#ffe040" />
      <circle cx="649" cy="369" r="1.300" fill="#ffe040" />

      <path d="M695.500 266Q712 266 722.500 246.500L732 254Q714 267 712.700 281.700z" fill="url(#stem)" />
      <path d="M690.500 272.500l5-6.500 17.200 15.700-5.700 6.300z" fill="url(#stem)" />
      <path d="M690.500 272.500l16.500 15.500M695.500 266l17.200 15.700" stroke={k} />
      <path d="M722.500 246.500C723 238 735 222 747 217.500c8-2.500 15 4 12 12C756 238 742 251 732 254.500z" fill="url(#grip)" />
      <path d="M722.500 246.500l9.500 8M747 217.500l12 12" stroke={k} />
    </svg>
  );
}

function Triad() {
  return (
    <svg className="absolute bottom-[46px] left-[42px]" width="56" height="54" viewBox="0 0 56 54" fill="none" role="img" aria-label="坐标系">
      <rect x="8.500" y="25.500" width="20" height="20" fill="#d3d4d5" stroke="#b8babc" />
      <path d="M8.500 42V16" stroke="#0b3cf0" strokeWidth="2.600" />
      <path d="M5.500 20l3-9 3 9z" fill="#0b3cf0" />
      <path d="M13 46.500h22" stroke="#c82020" strokeWidth="2.600" />
      <path d="M33 43.500l10 3-10 3z" fill="#e01c1c" />
      <circle cx="8.500" cy="46.500" r="4.500" fill="#9a9c9a" />
      <text x="5" y="50" fontSize="10" fontFamily="Liberation Sans" fill="#0c8c20">Y</text>
      <text x="5" y="11" fontSize="12" fontFamily="Liberation Sans" fill="#0b3cf0">Z</text>
      <text x="44" y="51" fontSize="12" fontFamily="Liberation Sans" fill="#e01c1c">X</text>
    </svg>
  );
}

/* ---------- bottom toolbar ---------- */

function BottomBar() {
  const f = "#b4b4b4";
  return (
    <div className="flex h-[35px] shrink-0 items-stretch overflow-hidden border-b border-[#a9a9a9] bg-white">
      <More mid className="-ml-0.5" />
      <Tool label="组件阵列"><Icon><path d="M2 4l6-3 6 3v6l5 1 4 4v5l-7 3-5-2-9-2z" stroke="#4848a0" strokeWidth="1.300" /><Cube x={4} y={3} s={9} c={GRAY} /><Cube x={4} y={11} s={9} c={GRAY} /><Cube x={11} y={12} s={10} c={GRAY} /></Icon></Tool>
      <Tool label="组件窗口"><Icon><rect x="1.500" y="2.500" width="21" height="19" fill="#e8e8e8" stroke="#a8a8a8" /><path d="M2 2h20v4H2z" fill="#b0b0b0" /><g opacity=".7"><Cube x={4} y={8} s={8} c={GRAY} /><Cube x={10} y={11} s={9} c={GRAY} /></g></Icon></Tool>
      <Tool label="添加组件"><Icon><Cube x={2} y={1} s={9} /><Cube x={2} y={11} s={10} /><Cube x={9} y={12} s={9} /><path d="M19 1v9M14.500 5.500h9" stroke="#3868e0" strokeWidth="2.400" strokeLinecap="butt" /></Icon></Tool>
      <More mid className="-mr-0.5" />
      <Tool label="移动组件"><Icon><Cube x={7} y={6} s={10} /><path d="M16 5l6-4M18 1h4v4M8 18l-6 4M2 18v4h4" stroke="#3058a8" strokeWidth="1.500" strokeDasharray="3 1" /></Icon></Tool>
      <Tool label="镜像装配"><Icon><path d="M2 2v9l8-4.500zM22 2v9l-8-4.500z" fill="#4434b8" stroke="#4434b8" /><path d="M12 1v22" stroke="#222" strokeDasharray="3 2" /><rect x="1.500" y="15.500" width="8" height="7" fill="#f6ea60" stroke="#887420" /><path d="M14 14v9h9z" fill="#c83c38" stroke="#a02828" /></Icon></Tool>
      <Tool label="装配约束"><Icon><path d="M2 4l6 4-6 4z" fill="#38b048" stroke="#389040" /><path d="M4 12l5 4-5 5z" fill="#d84040" /><path d="M14 10h9M18.500 1v9M13 22l5-7M18 22l5-7" stroke="#80408c" strokeWidth="1.500" /></Icon></Tool>
      <Sep />
      <Tool label="新建父对象"><Icon><rect x="10.500" y="1.500" width="6" height="6" fill="#e8e0a0" stroke="#777" /><rect x="16.500" y="8.500" width="6" height="6" fill="#f8e870" stroke="#777" /><rect x="10.500" y="8.500" width="6" height="6" fill="#f8e870" stroke="#777" /><path d="M3 21l9-8M1 18l3 1v4M9 11l3 1 2 3" stroke="#c09828" strokeWidth="2.500" /></Icon></Tool>
      <Tool label="爆炸图"><Icon><Cube x={2} y={1} s={9} /><Cube x={2} y={12} s={9} /><Cube x={13} y={12} s={9} /></Icon></Tool>
      <Tool label="装配序列"><Icon><rect x="13.500" y="2.500" width="6" height="6" fill="#eee" stroke="#333" strokeWidth="1.300" /><path d="M9.500 8.500h6v6h-6z" fill="#fff" stroke="#333" strokeWidth="1.300" /><path d="M4.500 14.500h6v6h-6z" fill="#f8e030" stroke="#e02020" strokeWidth="1.300" /></Icon></Tool>
      <Sep />
      <Tool label="产品标签"><Icon><Cube x={3} y={1} s={20} c={["#dcdcdc", "#a8a8a8", "#8c8c8c", "#777"]} /><path d="M1 15l11-3 3 3-2 4-11 3z" fill="#f9dd90" stroke="#d88a38" /><path d="M4 17l6-2M4 19l6-2" stroke="#b88838" /></Icon></Tool>
      <button type="button" aria-label="工具条选项" className="ml-[21px] flex w-[15px] shrink-0 flex-col items-center justify-center gap-2">
        <svg width="9" height="6" viewBox="0 0 9 6"><path d="M1 .5L3.500 3 1 5.500M5 .5L7.500 3 5 5.500" fill="none" stroke="#111" strokeWidth="1.300" /></svg>
        <svg width="5" height="3" viewBox="0 0 5 3"><path d="M0 0h5L2.500 3z" fill="#111" /></svg>
      </button>
      <span className="border-l border-[#dcdcdc]" />
      <Grip />
      <Tool label="草图"><Icon><path d="M2 2l15 3v17L2 20z" fill="#dfe8e0" stroke="#444" strokeWidth="1.300" /><path d="M5 5h5v6H5zM5 14h9v4H5zM12 7h3v4h-3z" fill="#fff" stroke="#444" /><path d="M18 2v11M12.500 7.500h11M14 3.500l8 8M22 3.500l-8 8" stroke="#e8d820" strokeWidth="1.500" /></Icon></Tool>
      <button type="button" disabled className="ml-1 flex shrink-0 items-center gap-1 whitespace-nowrap text-[11px] text-[#bdbdbd]">
        <svg width="24" height="24" viewBox="0 0 24 24"><rect x=".5" y=".5" width="23" height="23" fill="#d8d8d8" stroke="#bbb" /><path d="M4 4l17-1-1 12-11 2z" fill="#f4f4f4" stroke="#999" strokeWidth=".6" /><path d="M4 4h4l1 3H5zM12 3.700h4v3h-4zM9 7h3.500v3.500H9zM16 6.700h4v3h-4zM6 10.500h3.500L10 14l-3 .5zM12.500 10.200H16v3.500h-3.500z" fill="#8a8a8a" /><path d="M3 4l7 17" stroke="#8a8a8a" /></svg>
        完成草图
      </button>
      <Tool label="轮廓" className="ml-0.5"><Icon><path d="M2 1v12q0 6 5 6t5-6v-1q0-5 5-5t4 5v7" stroke="#333" strokeWidth="1.300" /><Dot x={2.5} y={12} /><Dot x={12} y={12} /><Dot x={21} y={12} /></Icon></Tool>
      <Tool label="直线"><Icon><path d="M4 20L20 4" stroke="#333" strokeWidth="1.300" /><Dot x={4} y={20} r={2} /><Dot x={20} y={4} r={2} /></Icon></Tool>
      <Tool label="圆弧"><Icon><path d="M3 3q18 0 18 17" stroke="#333" strokeWidth="1.300" /><Dot x={3} y={3} r={2} /><Dot x={16} y={7} r={2} /><Dot x={21} y={20} r={2} /></Icon></Tool>
      <Tool label="圆"><Icon><circle cx="12" cy="12.500" r="10" stroke="#333" strokeWidth="1.400" /></Icon></Tool>
      <Tool label="圆角"><Icon><path d="M2 2h8q12 0 12 12v8" stroke="#999" strokeWidth="1.300" /><path d="M12 2h10v10" stroke={f} strokeDasharray="1 2" /></Icon></Tool>
      <Tool label="倒斜角"><Icon><path d="M1 2h11l10 10v10" stroke="#999" strokeWidth="1.300" /><path d="M12 2h10v10" stroke={f} strokeDasharray="1 2" /></Icon></Tool>
      <Tool label="矩形"><Icon><rect x="3" y="5" width="19" height="14" stroke="#333" strokeWidth="1.400" /><Dot x={3} y={5} r={2} /><Dot x={22} y={19} r={2} /></Icon></Tool>
      <Tool label="样条"><Icon><path d="M3 11q5-6 9 1t10-3" stroke="#444" strokeWidth="1.300" /><path d="M3 12l4-8 8 15 7-10" stroke="#999" /><Dot x={3} y={12} c="#888" /><Dot x={7} y={3} c="#888" /><Dot x={15} y={20} c="#888" /><Dot x={22} y={9} c="#888" /><Dot x={8} y={9} /><Dot x={15} y={13} /></Icon></Tool>
      <Tool label="点"><Icon><path d="M12 4v17M4 12.500h17" stroke="#333" strokeWidth="1.400" /></Icon></Tool>
      <Tool label="偏置曲线"><Icon><path d="M2 12Q3 3 12 4q5 1 5 5 5 1 5 7-1 6-8 5H2z" stroke="#a8a8a8" strokeWidth="1.200" /><path d="M5 13q1-7 7-6 3 1 3 5 4 0 4 3 0 4-5 3H5z" stroke="#a8a8a8" /></Icon></Tool>
      <More mid />
      <Sep />
      <Tool label="快速修剪"><Icon><path d="M1 16h12M5 3l9 19" stroke="#999" strokeWidth="1.200" /><path d="M14 16h8" stroke={f} strokeDasharray="1 2" /><path d="M13 13l6-7 3 2-5 6z" fill="#ddd" stroke={f} /></Icon></Tool>
      <Tool label="快速延伸"><Icon><path d="M1 16h12M5 3l9 19" stroke="#999" strokeWidth="1.200" /><path d="M13 14l7-11 3 2-7 10-3 1z" fill="#ddd" stroke="#aaa" /></Icon></Tool>
      <Tool label="制作拐角"><Icon><path d="M1 11l13-1v12M7 5l7 6" stroke="#999" strokeWidth="1.200" /><path d="M14 1v9M15 11h8" stroke={f} strokeDasharray="1 2" /></Icon></Tool>
      <Sep />
      <Tool label="快速尺寸"><Icon><path d="M2 7v10M22 7v10M3 12h18M5 10l-2 2 2 2M19 10l2 2-2 2" stroke={f} strokeWidth="1.300" /><path d="M15 1l-6 9h4l-5 11 10-13h-4l4-7z" fill="#ddd" stroke={f} /></Icon></Tool>
      <More mid className="-mr-px" />
      <Sep />
      <Tool label="几何约束"><Icon><path d="M2 17l7-8M7 17l7-8M12 21h10M17 13v8" stroke={f} strokeWidth="1.300" /></Icon></Tool>
      <Tool label="设为对称"><Icon><path d="M6 2H2v19h5M18 2h4v19h-5" stroke={f} strokeWidth="1.500" /><path d="M12 1v22" stroke={f} strokeDasharray="3 2" /><path d="M7 3v6M17 3v6M7 6h3M17 6h-3" stroke={f} /></Icon></Tool>
      <Tool label="显示约束"><Icon><path d="M1 7v10l5-5z" fill="#c4c4c4" /><path d="M10 11l7-9M15 11l8-9M12 22h11M17 14v8" stroke={f} strokeWidth="1.300" /></Icon></Tool>
      <More mid className="-mr-px" />
      <Sep />
      <Tool label="编辑草图"><Icon><path d="M2 2h10v9H2zM11 16v6h11v-7" stroke="#aaa" strokeWidth="1.300" /><path d="M12 16l7-9 3 2-6 8z" fill="#ddd" stroke="#aaa" /><rect x="1.500" y="16.500" width="6" height="6" stroke="#aaa" /><path d="M3 21l3-3" stroke="#aaa" /></Icon></Tool>
      <Tool label="重新附着"><Icon><circle cx="8" cy="6" r="5" stroke={f} strokeWidth="1.500" /><path d="M2 14q10-4 20 0l-4 5-14 2z" fill="#ddd" stroke={f} /></Icon></Tool>
    </div>
  );
}

export default function App() {
  return (
    <div className="flex h-screen flex-col overflow-hidden bg-white font-[Noto_Sans_CJK_SC,sans-serif]">
      <header className="shrink-0 border-b border-[#8d979d]">
        <TopStrip />
        <FeatureBar />
        <DimensionBar />
        <SelectionBar />
      </header>
      <main className="flex min-h-0 flex-1">
        <Navigator />
        <div className="w-[9px] shrink-0 bg-white" />
        <section aria-label="图形窗口" className="relative flex min-w-0 flex-1 items-center justify-center border-l border-[#858c90] bg-linear-to-b from-[#b6b7b8] to-[#e8eaec]">
          <ValveModel />
          <Triad />
        </section>
      </main>
      <BottomBar />
      <footer className="flex h-1.5 shrink-0 items-end justify-end gap-1 overflow-hidden">
        <span className="h-1 w-4 border border-b-0 border-[#aaa] bg-[#e4e4e4]" />
        <span className="h-1 w-2 border border-b-0 border-r-0 border-[#666]" />
      </footer>
    </div>
  );
}
